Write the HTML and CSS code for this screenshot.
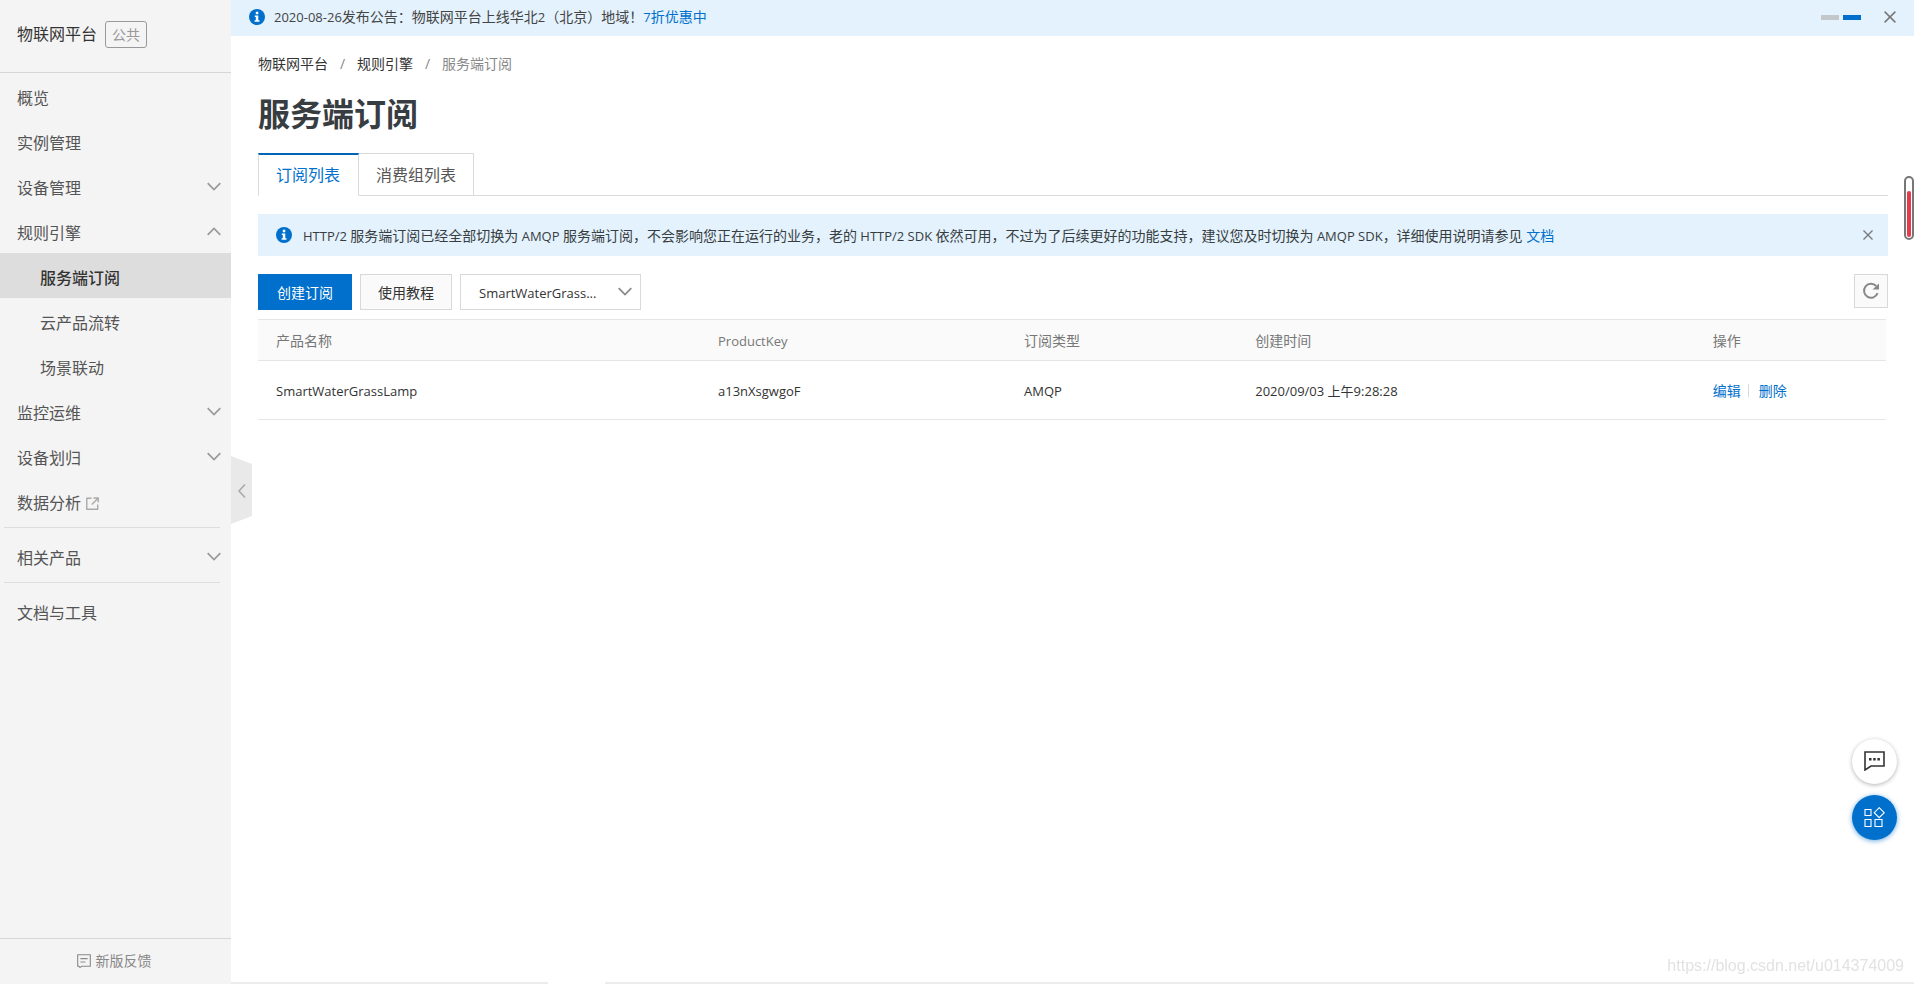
FILE: index.html
```html
<!DOCTYPE html>
<html lang="zh-CN">
<head>
<meta charset="utf-8">
<meta name="viewport" content="width=device-width, initial-scale=1">
<title>服务端订阅 - 物联网平台</title>
<link rel="stylesheet" href="styles.css">
</head>
<body>
<svg class="defs" aria-hidden="true">
  <symbol id="down" viewBox="0 0 14 9"><path d="M0.7 1.2 7 7.5l6.3-6.3" fill="none" stroke="currentColor" stroke-width="1.7"/></symbol>
  <symbol id="up" viewBox="0 0 14 9"><path d="M0.7 7.8 7 1.5l6.3 6.3" fill="none" stroke="currentColor" stroke-width="1.7"/></symbol>
  <symbol id="close" viewBox="0 0 12 12"><path d="M0.6 0.6 11.4 11.4M11.4 0.6 0.6 11.4" fill="none" stroke="currentColor" stroke-width="1.5"/></symbol>
  <symbol id="info" viewBox="0 0 16 16"><circle cx="8" cy="8" r="8" fill="#0070cc"/><path d="M6.8 2.8h2.5v2.4H6.8zM5.8 6.5h3.5v4.8h1.2v1.4H5.6v-1.4h1.2V7.9h-1z" fill="#fff"/></symbol>
</svg>
<div class="app">
  <aside class="sidebar">
    <header class="brand"><span>物联网平台</span><span class="badge">公共</span></header>
    <nav class="menu">
      <a class="item" href="#">概览</a>
      <a class="item" href="#">实例管理</a>
      <a class="item" href="#">设备管理<svg class="arrow"><use href="#down"/></svg></a>
      <a class="item" href="#">规则引擎<svg class="arrow"><use href="#up"/></svg></a>
      <a class="item sub active" href="#">服务端订阅</a>
      <a class="item sub" href="#">云产品流转</a>
      <a class="item sub" href="#">场景联动</a>
      <a class="item" href="#">监控运维<svg class="arrow"><use href="#down"/></svg></a>
      <a class="item" href="#">设备划归<svg class="arrow"><use href="#down"/></svg></a>
      <a class="item" href="#">数据分析<svg class="external" viewBox="0 0 13 13"><path d="M5.5 1.3H0.8v10.9h10.9V7.5M7.5 1h4.7v4.5M12 1.2 5.8 7.4" fill="none" stroke="currentColor" stroke-width="1.4"/></svg></a>
      <hr class="rule">
      <a class="item" href="#">相关产品<svg class="arrow"><use href="#down"/></svg></a>
      <hr class="rule">
      <a class="item" href="#">文档与工具</a>
    </nav>
    <a class="feedback" href="#"><svg class="note" viewBox="0 0 14 14"><path d="M0.7 0.7h12.6v11.6H4.8L3 13.4 2 12.3H0.7zM3.4 4.6h7.2M3.4 8h5" fill="none" stroke="currentColor" stroke-width="1.1"/></svg>新版反馈</a>
    <button class="collapse" type="button" aria-label="收起"><svg viewBox="0 0 21 68"><path d="M0 0 21 8v52L0 68z" fill="#e9e9e9"/><path d="M14 28.5 8 35l6 6.500" fill="none" stroke="#aaa" stroke-width="1.6"/></svg></button>
  </aside>

  <div class="page">
    <div class="banner">
      <svg class="info"><use href="#info"/></svg>
      <p class="banner-text"><span class="latin">2020-08-26</span>发布公告：物联网平台上线华北<span class="latin">2</span>（北京）地域！<a href="#"><span class="latin">7</span>折优惠中</a></p>
      <div class="dots"><span class="dot"></span><span class="dot on"></span></div>
      <button class="icon-button" type="button" aria-label="关闭公告"><svg class="close-large"><use href="#close"/></svg></button>
    </div>

    <main class="content">
      <nav class="crumbs">
        <a href="#">物联网平台</a><span class="slash">/</span><a href="#">规则引擎</a><span class="slash">/</span><span class="current">服务端订阅</span>
      </nav>
      <h1 class="title">服务端订阅</h1>
      <div class="tabs" role="tablist">
        <button class="tab selected" type="button" role="tab" aria-selected="true">订阅列表</button>
        <button class="tab" type="button" role="tab" aria-selected="false">消费组列表</button>
      </div>
      <div class="alert">
        <svg class="info"><use href="#info"/></svg>
        <p class="alert-text"><span class="latin">HTTP/2 </span>服务端订阅已经全部切换为<span class="latin"> AMQP </span>服务端订阅，不会影响您正在运行的业务，老的<span class="latin"> HTTP/2 SDK </span>依然可用，不过为了后续更好的功能支持，建议您及时切换为<span class="latin"> AMQP SDK</span>，详细使用说明请参见 <a href="#">文档</a></p>
        <button class="icon-button" type="button" aria-label="关闭提示"><svg class="close-small"><use href="#close"/></svg></button>
      </div>
      <div class="toolbar">
        <button class="button primary" type="button">创建订阅</button>
        <button class="button" type="button">使用教程</button>
        <div class="picker">
          <select class="select" aria-label="产品"><option>SmartWaterGrass...</option></select>
          <svg class="picker-arrow"><use href="#down"/></svg>
        </div>
        <button class="refresh" type="button" aria-label="刷新"><svg viewBox="0 0 18 18"><path d="M15.600 11.200A7 7 0 1 1 14.200 4" fill="none" stroke="currentColor" stroke-width="2"/><path d="M17 1.500V7.500H10.500z" fill="currentColor"/></svg></button>
      </div>
      <table class="table">
        <colgroup><col class="c-name"><col class="c-key"><col class="c-type"><col class="c-time"><col></colgroup>
        <thead><tr><th>产品名称</th><th><span class="latin">ProductKey</span></th><th>订阅类型</th><th>创建时间</th><th>操作</th></tr></thead>
        <tbody><tr><td>SmartWaterGrassLamp</td><td>a13nXsgwgoF</td><td>AMQP</td><td>2020/09/03 上午9:28:28</td><td><div class="actions"><a href="#">编辑</a><a href="#">删除</a></div></td></tr></tbody>
      </table>
    </main>
    <div class="bottom-edge"><span class="edge-left"></span><span class="edge-right"></span></div>
  </div>
</div>

<div class="gauge"><span class="gauge-fill"></span></div>
<div class="floating">
  <button class="fab" type="button" aria-label="咨询"><svg viewBox="0 0 21 20"><path d="M1 1h19v14H7l-6 4z" fill="none" stroke="currentColor" stroke-width="1.6"/><path d="M5 7h2.500v2.500H5zM9.200 7h2.500v2.500H9.200zM13.400 7h2.500v2.500h-2.500z" fill="currentColor"/></svg></button>
  <button class="fab blue" type="button" aria-label="应用"><svg viewBox="0 0 21 20"><path d="M1 2.500h6v6H1zM1 12.500h6v7H1zM11 12.500h7v7h-7zM15.200 0.700 20.200 5.700 15.200 10.700 10.200 5.700z" fill="none" stroke="currentColor" stroke-width="1.100"/></svg></button>
</div>
<p class="watermark">https://blog.csdn.net/u014374009</p>
</body>
</html>
```
FILE: styles.css
```css
* { box-sizing: border-box; }

body {
  margin: 0;
  background: #fff;
  color: #333;
  font: 14px/20px "Open Sans", "Noto Sans CJK SC", sans-serif;
}

button, select { font: inherit; color: inherit; cursor: pointer; }
a { color: #0070cc; text-decoration: none; }
p { margin: 0; }
svg { display: block; flex: none; }
.defs { position: absolute; width: 0; height: 0; }
.latin { font-size: 13px; }

.app { display: flex; min-height: 100vh; }

/* Sidebar */
.sidebar {
  position: relative;
  flex: none;
  display: flex;
  flex-direction: column;
  width: 231px;
  background: #f4f4f4;
}
.brand {
  display: flex;
  align-items: center;
  gap: 8px;
  height: 73px;
  padding: 0 17px 4px;
  border-bottom: 1px solid #d6d6d6;
  font-size: 16px;
}
.badge {
  padding: 2px 6px;
  border: 1px solid #999;
  border-radius: 3px;
  color: #999;
  font-size: 14px;
  line-height: 21px;
}
.menu { flex: 1; }
.item {
  display: flex;
  align-items: center;
  height: 45px;
  padding: 5px 10px 0 17px;
  color: #555;
  font-size: 16px;
}
.sub { padding-left: 40px; }
.active { background: #ddd; color: #333; font-weight: 500; }
.arrow { width: 14px; height: 9px; margin-left: auto; margin-bottom: 4px; color: #999; }
.external { width: 13px; height: 13px; margin-left: 5px; color: #aaa; }
.rule { height: 1px; margin: 4px 11px 5px 4px; border: 0; background: #dedede; }
.feedback {
  display: flex;
  align-items: center;
  justify-content: center;
  gap: 5px;
  height: 46px;
  padding: 0 3px 2px 0;
  border-top: 1px solid #d6d6d6;
  color: #888;
}
.note { width: 14px; height: 14px; }
.collapse {
  position: absolute;
  left: 100%;
  top: 50%;
  width: 21px;
  height: 68px;
  margin-top: -36px;
  padding: 0;
  border: 0;
  background: none;
}

/* Announcement */
.page { flex: 1; min-width: 0; display: flex; flex-direction: column; }
.banner {
  display: flex;
  align-items: center;
  height: 36px;
  padding: 0 18px 2px;
  background: #e3f2fd;
  color: #444;
}
.info { width: 16px; height: 16px; }
.banner-text { flex: 1; padding-left: 9px; }
.dots { display: flex; gap: 4px; margin-right: 23px; }
.dot { width: 18px; height: 5px; background: #c3c7ca; }
.on { background: #0070cc; }
.icon-button { padding: 0; border: 0; background: none; color: #777; }
.close-large { width: 12px; height: 12px; }
.close-small { width: 10px; height: 10px; }

/* Content */
.content { flex: 1; padding: 18px 26px 0 27px; }
.crumbs { display: flex; }
.crumbs a { color: #333; }
.slash { width: 29px; text-align: center; color: #888; }
.current { color: #888; }
.title { margin: 20px 0 19px; color: #373d41; font-size: 32px; line-height: 40px; font-weight: 700; }
.tabs { display: flex; height: 43px; border-bottom: 1px solid #d9dcde; }
.tab {
  height: 43px;
  padding: 1px 17px 0;
  border: 1px solid #d9dcde;
  background: #fff;
  color: #555;
  font-size: 16px;
}
.tab + .tab { border-left: 0; }
.selected { padding: 0 18px 0 17px; border-top: 2px solid #0064b4; border-bottom-color: #fff; color: #0070cc; }
.alert {
  display: flex;
  align-items: center;
  min-height: 42px;
  margin: 18px 0;
  padding: 0 15px 0 18px;
  background: #e3f2fd;
  color: #373d41;
}
.alert-text { flex: 1; padding: 2px 0 0 11px; }

.toolbar { display: flex; align-items: flex-start; gap: 8px; margin-bottom: 9px; }
.button {
  height: 36px;
  padding: 1px 17px 0;
  border: 1px solid #d9d9d9;
  background: #fafafa;
}
.primary { padding: 1px 18px 0; border-color: #0070cc; background: #0070cc; color: #fff; }
.picker { position: relative; width: 181px; }
.select {
  width: 100%;
  height: 36px;
  padding: 1px 30px 0 18px;
  border: 1px solid #d9d9d9;
  border-radius: 0;
  background: #fff;
  appearance: none;
  font-size: 13px;
}
.picker-arrow {
  position: absolute;
  right: 9px;
  top: 13px;
  width: 14px;
  height: 9px;
  color: #888;
  pointer-events: none;
}
.refresh {
  display: grid;
  place-items: center;
  width: 34px;
  height: 34px;
  margin-left: auto;
  padding: 0;
  border: 1px solid #d9d9d9;
  background: #fafafa;
  color: #888;
}
.refresh svg { width: 18px; height: 18px; }

.table { width: calc(100% - 2px); border-collapse: collapse; table-layout: fixed; }
.c-name { width: 27.15%; }
.c-key { width: 18.8%; }
.c-type { width: 14.2%; }
.c-time { width: 28.1%; }
.table th, .table td { padding: 0 18px; text-align: left; font-weight: 400; border-bottom: 1px solid #e6e6e6; }
.table th { height: 41px; padding-top: 1px; border-top: 1px solid #e6e6e6; background: #fafafa; color: #777; }
.table td { height: 59px; padding-top: 1px; font-size: 13px; }
.actions { display: flex; font-size: 14px; }
.actions a + a { position: relative; margin-left: 18px; }
.actions a + a::before { content: ""; position: absolute; left: -11px; top: 3px; width: 1px; height: 13px; background: #d9d9d9; }

.bottom-edge { display: flex; gap: 57px; height: 2px; }
.edge-left { width: 317px; background: #ececec; }
.edge-right { flex: 1; background: #ececec; }

/* Overlays */
.gauge {
  position: fixed;
  right: 0;
  top: 176px;
  width: 10px;
  height: 64px;
  padding: 13px 1px 1px;
  border: 2px solid #777;
  border-radius: 5px;
  background: #fff;
}
.gauge-fill { display: block; height: 100%; border-radius: 2px; background: #e8394a; }
.floating { position: fixed; right: 17px; bottom: 144px; display: grid; gap: 11px; }
.fab {
  display: grid;
  place-items: center;
  width: 45px;
  height: 45px;
  padding: 0 0 2px;
  border: 0;
  border-radius: 50%;
  background: #fff;
  box-shadow: 0 1px 4px rgba(0, 0, 0, .3);
}
.fab svg { width: 21px; height: 20px; }
.blue { background: #0070cc; color: #fff; box-shadow: 0 1px 5px rgba(0, 112, 204, .6); }
.watermark {
  position: fixed;
  right: 10px;
  bottom: 8px;
  color: #e2e2e2;
  font: 16px/20px "Liberation Sans", sans-serif;
}
```
